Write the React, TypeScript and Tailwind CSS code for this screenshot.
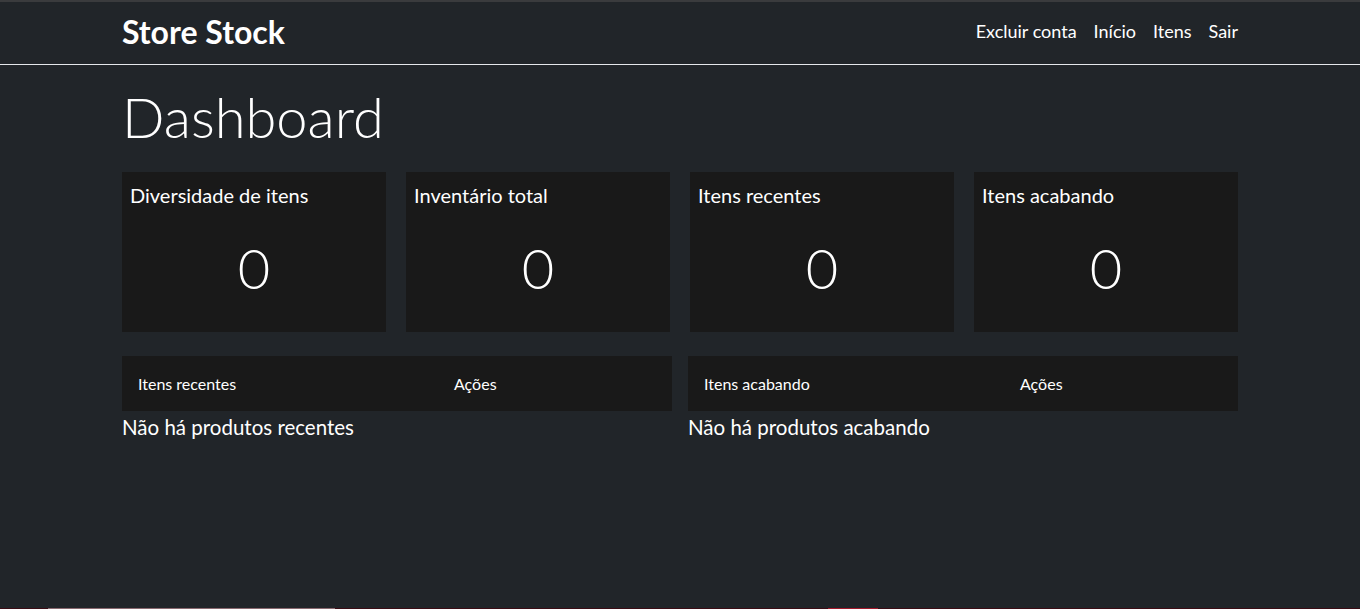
import React from "react";

const stats = [
    { title: "Diversidade de itens", value: 0 },
    { title: "Inventário total", value: 0 },
    { title: "Itens recentes", value: 0 },
    { title: "Itens acabando", value: 0 },
];

const tables = [
    { head: "Itens recentes", empty: "Não há produtos recentes" },
    { head: "Itens acabando", empty: "Não há produtos acabando" },
];

const App = () => {
    return (
        <div className="h-[609px] flex flex-col bg-[#212529] text-white font-['Lato','Open_Sans',sans-serif] overflow-hidden">
            <div className="h-[2px] bg-[#3a3b3d]"></div>
            <nav className="h-[63px] border-b border-[#e5e7eb] flex">
                <div className="w-[1116px] mx-auto flex items-center justify-between">
                    <span className="text-[32px] font-bold leading-none -mt-[2px]">Store Stock</span>
                    <div className="flex items-center gap-[17px] text-[18px] -mt-[3px]">
                        <a>Excluir conta</a>
                        <a>Início</a>
                        <a>Itens</a>
                        <a>Sair</a>
                    </div>
                </div>
            </nav>

            <main className="flex-1 w-[1116px] mx-auto">
                <h1 className="text-[56px] font-light leading-[1.2] mt-[18px] mb-[22px]">Dashboard</h1>

                <div className="grid grid-cols-4 gap-5">
                    {stats.map((s) => (
                        <div key={s.title} className="h-[160px] bg-[#191919] p-2 flex flex-col">
                            <h5 className="text-[20px] leading-[1.2] mt-[3px]">{s.title}</h5>
                            <div className="flex-1 flex items-center justify-center text-[56px] font-light pt-[5px]">
                                {s.value}
                            </div>
                        </div>
                    ))}
                </div>

                <div className="grid grid-cols-2 gap-4 mt-6">
                    {tables.map((t) => (
                        <div key={t.head}>
                            <div className="h-[55px] bg-[#191919] flex items-center text-[16px]">
                                <span className="w-[316px] pl-4">{t.head}</span>
                                <span className="pl-4">Ações</span>
                            </div>
                            <p className="text-[20.5px] leading-[1.3] mt-[3px]">{t.empty}</p>
                        </div>
                    ))}
                </div>
            </main>

            <div className="h-px flex bg-[#3b0c14]">
                <div className="w-[48px]"></div>
                <div className="w-[287px] bg-[#8a6a70]"></div>
                <div className="w-[493px]"></div>
                <div className="w-[50px] bg-[#a3182a]"></div>
            </div>
        </div>
    );
};

export default App;
